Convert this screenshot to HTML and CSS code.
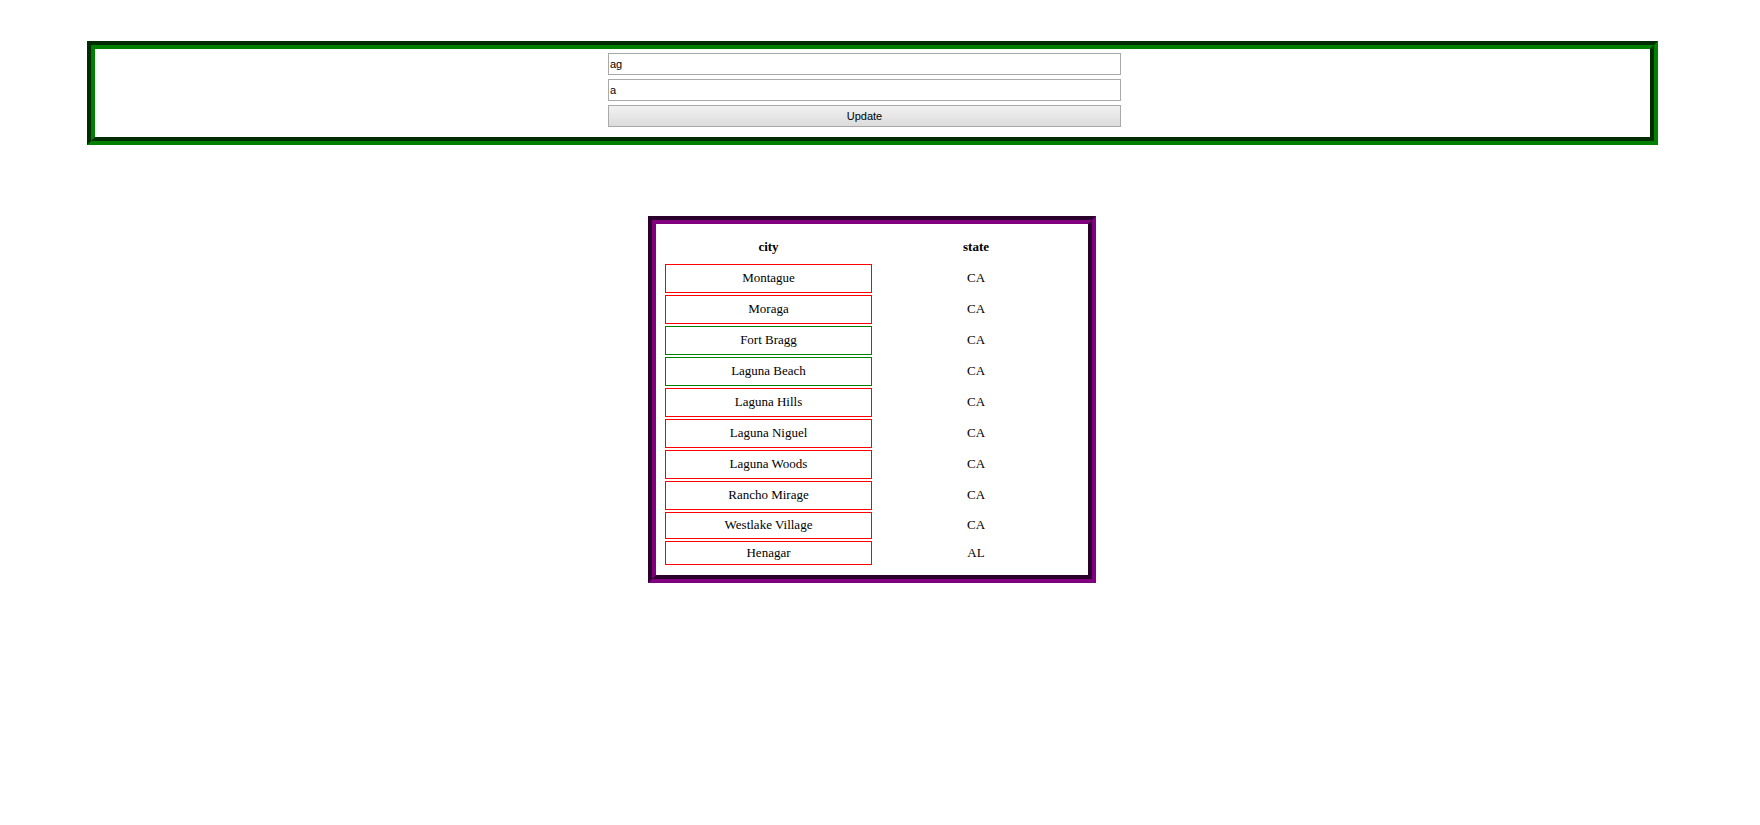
FILE: index.html
```html
<!DOCTYPE html>
<html>
<head>
<meta charset="utf-8">
<title>Cities</title>
<link rel="stylesheet" href="styles.css">
</head>
<body>
<div class="page">
  <form class="controls">
    <input class="field" type="text" value="ag">
    <input class="field" type="text" value="a">
    <button class="update" type="button">Update</button>
  </form>

  <div class="results">
    <div class="grid">
      <div class="head">city</div>
      <div class="head">state</div>

      <div class="city bad">Montague</div><div class="state">CA</div>
      <div class="city bad">Moraga</div><div class="state">CA</div>
      <div class="city good">Fort Bragg</div><div class="state">CA</div>
      <div class="city good">Laguna Beach</div><div class="state">CA</div>
      <div class="city bad">Laguna Hills</div><div class="state">CA</div>
      <div class="city bad">Laguna Niguel</div><div class="state">CA</div>
      <div class="city bad">Laguna Woods</div><div class="state">CA</div>
      <div class="city bad">Rancho Mirage</div><div class="state">CA</div>
      <div class="city bad">Westlake Village</div><div class="state">CA</div>
      <div class="city bad">Henagar</div><div class="state">AL</div>
    </div>
  </div>
</div>
</body>
</html>
```

FILE: styles.css
```css
html, body {
  margin: 0;
  padding: 0;
  background: #ffffff;
}

.page {
  padding-top: 41px;
  padding-bottom: 40px;
}

.controls {
  margin: 0 0 0 87px;
  width: 1042px;
  border: 8px groove #008000;
  padding: 4px 0 10px 513px;
  box-sizing: content-box;
  display: flex;
  flex-direction: column;
  gap: 4px;
}

.field,
.update {
  width: 513px;
  height: 22px;
  box-sizing: border-box;
  margin: 0;
  font-family: "Liberation Sans", Arial, sans-serif;
  font-size: 11px;
  color: #000000;
}

.field {
  border: 1px solid #a9a9a9;
  padding: 1px 1px;
  background: #ffffff;
  outline: none;
}

.update {
  border: 1px solid #a9a9a9;
  border-radius: 0;
  padding: 0;
  background: linear-gradient(#f1f1f1, #dcdcdc);
  text-align: center;
}

.results {
  margin: 71px 0 0 648px;
  border: 8px groove #800080;
  padding: 4px 10px 10px 9px;
  box-sizing: content-box;
  width: 413px;
}

.grid {
  display: grid;
  grid-template-columns: 207px 204px;
  grid-template-rows: 34px repeat(8, 29px) 27px 24px;
  column-gap: 2px;
  row-gap: 2px;
  font-family: "Liberation Serif", "Times New Roman", serif;
  font-size: 13px;
  color: #000000;
}

.head {
  font-weight: bold;
  display: flex;
  align-items: center;
  justify-content: center;
  padding-top: 4px;
  box-sizing: border-box;
}

.city,
.state {
  display: flex;
  align-items: center;
  justify-content: center;
  box-sizing: border-box;
  padding-bottom: 1px;
}

.city.bad {
  border: 1px solid #ff0000;
}

.city.good {
  border: 1px solid #008000;
}
```
